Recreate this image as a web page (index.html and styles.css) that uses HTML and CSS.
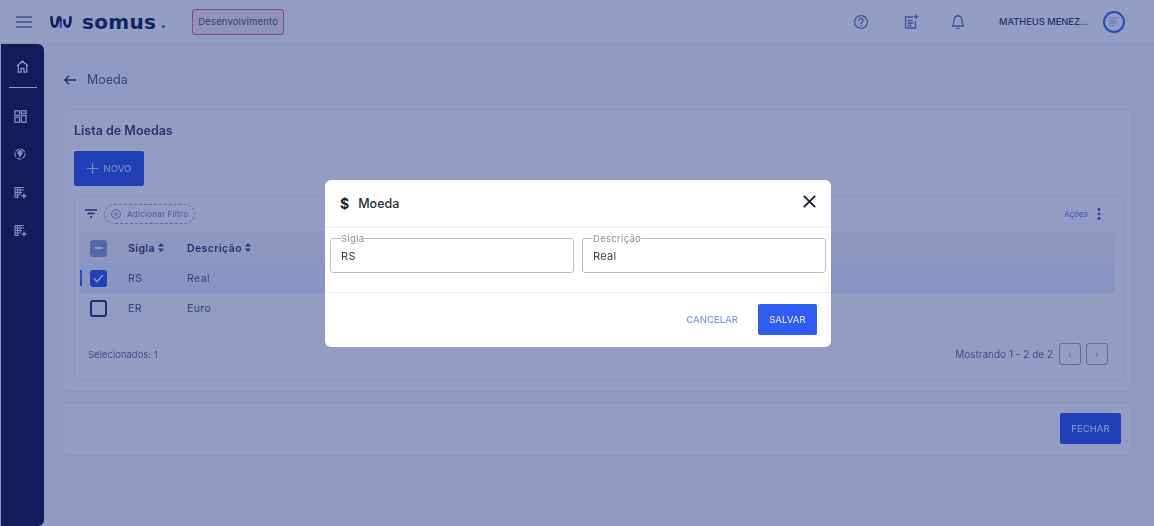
FILE: index.html
```html
<!DOCTYPE html>
<html lang="pt-BR">
<head>
  <meta charset="UTF-8" />
  <meta name="viewport" content="width=device-width, initial-scale=1.0"/>
  <title>Moeda</title>
  <link rel="stylesheet" href="styles.css">
</head>
<body>

<div class="page">
  <header class="topbar">
    <svg class="burger" width="16" height="12" viewBox="0 0 16 12"><path d="M0 1h16M0 6h16M0 11h16" stroke="#5d6c9c" stroke-width="1.400"/></svg>
    <div class="logo">
      <svg width="22" height="14" viewBox="0 0 22 14" fill="none"><path d="M1.500 2.500c0 5 .8 9 3 9s3-3 3.200-6c.2-2 .8-3 1.500-3s1.300 1 1.500 3" stroke="#00103c" stroke-width="2.800" stroke-linecap="round"/><path d="M20.500 2.500c0 5-.8 9-3 9s-3-3-3.200-6" stroke="#00103c" stroke-width="2.800" stroke-linecap="round"/><path d="M10.700 12V8" stroke="#2f5be7" stroke-width="2.400" stroke-linecap="round"/></svg>
      <span class="logo-name">somus</span><span class="logo-dot">.</span>
    </div>
    <div class="env-tag">Desenvolvimento</div>
    <div class="topbar-right">
      <svg class="top-icon icon-help" width="16" height="16" viewBox="0 0 16 16" fill="none" stroke="#5a6a9c" stroke-width="1.300"><circle cx="8" cy="8" r="6.400"/><path d="M6 6.300a2 2 0 1 1 3 1.700c-.7.400-1 .8-1 1.500" stroke-linecap="round"/><path d="M8 11v1.200"/></svg>
      <svg class="top-icon" width="16" height="16" viewBox="0 0 16 16" fill="none" stroke="#5a6a9c" stroke-width="1.300"><path d="M10 3H2.500v11h10V7"/><path d="M4.500 6.500h5M4.500 9h6M4.500 11.500h4"/><path d="M13 .5v4.500M10.800 2.700h4.500"/></svg>
      <svg class="top-icon" width="16" height="16" viewBox="0 0 16 16" fill="none" stroke="#5a6a9c" stroke-width="1.300"><path d="M8 2c-2.600 0-4 1.800-4 4.500 0 3-1 4.500-1.500 5.500h11c-.5-1-1.500-2.500-1.500-5.500C12 3.800 10.600 2 8 2z"/><path d="M8 .7V2M6.500 14.300h3"/></svg>
      <span class="user-name">MATHEUS MENEZ...</span>
      <div class="avatar"><svg width="12" height="10" viewBox="0 0 12 10" stroke="#a5afcc" stroke-width="1"><path d="M1 1h10M1 3.500h7M1 6h9M1 8.500h6"/></svg></div>
    </div>
  </header>

  <div class="layout">
    <nav class="sidebar">
      <svg class="side-icon" width="13" height="13" viewBox="0 0 14 14" fill="none" stroke="#e8ecf7" stroke-width="1.400"><path d="M1 6.500 7 1.300l6 5.200M2.500 5.500v7.500h3V9h3v4h3V5.500"/></svg>
      <div class="side-line"></div>
      <svg class="side-icon dash" width="13" height="13" viewBox="0 0 14 14" fill="none" stroke="#d5dbee" stroke-width="1.400"><rect x="1" y=".8" width="5" height="5"/><rect x="8" y=".8" width="5" height="3"/><rect x="1" y="7.800" width="5" height="5.400"/><rect x="8" y="6" width="5" height="7.200"/></svg>
      <svg class="side-icon coin" width="12" height="12" viewBox="0 0 12 12" fill="none" stroke="#d5dbee" stroke-width="1.100"><circle cx="6" cy="6" r="5" stroke-dasharray="5 1"/><path d="M6 2.800c1.300 0 2 .9 2 1.900C8 6 6.500 7.500 6 8.500 5.500 7.500 4 6 4 4.700c0-1 .7-1.900 2-1.900z" fill="#d5dbee"/></svg>
      <svg class="side-icon list-a" width="13" height="13" viewBox="0 0 13 13" fill="none" stroke="#d5dbee" stroke-width="1.100"><path d="M1 1.500h9M1 4h9M1 6.500h7M1 9h5M1 11.500h4M1 1v11M3.500 1v11M6 1v8"/><path d="M10 7.500v5M7.500 10h5" stroke-width="1.400"/></svg>
      <svg class="side-icon list-b" width="13" height="13" viewBox="0 0 13 13" fill="none" stroke="#d5dbee" stroke-width="1.100"><path d="M1 1.500h9M1 4h9M1 6.500h7M1 9h5M1 11.500h4M1 1v11M3.500 1v11M6 1v8"/><path d="M10 7.500v5M7.500 10h5" stroke-width="1.400"/></svg>
    </nav>

    <main class="content">
      <div class="page-title">
        <svg width="12" height="10" viewBox="0 0 12 10" fill="none" stroke="#1f2c58" stroke-width="1.300"><path d="M12 5H1M5 .8 1 5l4 4.200"/></svg>
        <span>Moeda</span>
      </div>

      <section class="panel">
        <h2 class="panel-title">Lista de Moedas</h2>
        <button class="btn btn-new">
          <svg width="11" height="11" viewBox="0 0 11 11" stroke="#c4cff6" stroke-width="1.200"><path d="M5.500 0v11M0 5.500h11"/></svg>
          NOVO
        </button>

        <div class="grid-card">
          <div class="filter-row">
            <svg width="12" height="9" viewBox="0 0 12 9" stroke="#1b2a60" stroke-width="1.300"><path d="M0 1h12M2.500 4.500h7M5 8h2"/></svg>
            <div class="filter-pill">
              <svg width="10" height="10" viewBox="0 0 10 10" fill="none" stroke="#6e7cab" stroke-width=".9"><circle cx="5" cy="5" r="4.400"/><path d="M5 2.800v4.400M2.800 5h4.400"/></svg>
              Adicionar Filtro
            </div>
            <div class="actions">Ações
              <svg width="4" height="12" viewBox="0 0 4 12" fill="#2a4bc4"><circle cx="2" cy="1.500" r="1.400"/><circle cx="2" cy="6" r="1.400"/><circle cx="2" cy="10.500" r="1.400"/></svg>
            </div>
          </div>

          <div class="table">
            <div class="row row-head">
              <span class="check check-some"></span>
              <span class="cell-sigla">Sigla <svg class="sort" width="6" height="9" viewBox="0 0 6 9" fill="#2e3a66"><path d="M3 0l3 3.500H0zM3 9 0 5.500h6z"/></svg></span>
              <span class="cell-desc">Descrição <svg class="sort" width="6" height="9" viewBox="0 0 6 9" fill="#2e3a66"><path d="M3 0l3 3.500H0zM3 9 0 5.500h6z"/></svg></span>
            </div>
            <div class="row row-selected">
              <span class="check check-on"><svg width="11" height="9" viewBox="0 0 11 9" fill="none" stroke="#e6ebfc" stroke-width="1.600"><path d="M1 4.500 4 7.500 10 1"/></svg></span>
              <span class="cell-sigla">RS</span>
              <span class="cell-desc">Real</span>
            </div>
            <div class="row row-plain">
              <span class="check"></span>
              <span class="cell-sigla">ER</span>
              <span class="cell-desc">Euro</span>
            </div>
          </div>

          <div class="grid-footer">
            <span>Selecionados: 1</span>
            <div class="pager">
              <span class="pager-text">Mostrando 1 - 2 de 2</span>
              <button class="pager-btn">‹</button>
              <button class="pager-btn">›</button>
            </div>
          </div>
        </div>
      </section>

      <section class="panel panel-bottom">
        <button class="btn btn-close">FECHAR</button>
      </section>
    </main>
  </div>
</div>

<div class="overlay">
  <div class="modal">
    <div class="modal-head">
      <span class="modal-dollar">$</span>
      <span class="modal-title">Moeda</span>
      <svg class="modal-x" width="13" height="13" viewBox="0 0 13 13" stroke="#1c1f2b" stroke-width="1.900"><path d="M.8.800l11.400 11.400M12.200.800.800 12.200"/></svg>
    </div>
    <div class="modal-body">
      <fieldset class="field"><legend>Sigla</legend><span>RS</span></fieldset>
      <fieldset class="field"><legend>Descrição</legend><span>Real</span></fieldset>
    </div>
    <div class="modal-foot">
      <button class="btn-cancel">CANCELAR</button>
      <button class="btn btn-save">SALVAR</button>
    </div>
  </div>
</div>

</body>
</html>
```

FILE: styles.css
```css
:root {
  --text: #3e4a70;
  --line: #e3e7f2;
}

* {
  box-sizing: border-box;
}

html, body {
  height: 100%;
}

body {
  margin: 0;
  font-family: "Inter", "Liberation Sans", sans-serif;
  background: #eff3f9;
  color: var(--text);
  overflow: hidden;
}

.page {
  height: 526px;
  display: flex;
  flex-direction: column;
  filter: blur(0.7px);
}

.topbar {
  height: 44px;
  flex: none;
  display: flex;
  align-items: center;
  padding: 0 29px 0 16px;
  background: #f8f9fb;
  border-bottom: 1px solid var(--line);
}

.logo {
  display: flex;
  align-items: center;
  margin-left: 18px;
}

.logo-name {
  margin-left: 10px;
  font-family: "DejaVu Sans", sans-serif;
  font-weight: 700;
  font-size: 20px;
  letter-spacing: 0.300px;
  line-height: 20px;
  color: #00103c;
}

.logo-dot {
  margin-left: 4px;
  font-weight: 700;
  font-size: 18px;
  line-height: 20px;
  color: #2f5be7;
}

.env-tag {
  margin-left: 26px;
  width: 92px;
  height: 26px;
  display: flex;
  align-items: center;
  justify-content: center;
  font-size: 9.500px;
  letter-spacing: 0.150px;
  color: #3e4a70;
  background: #f2e2e9;
  border: 1px solid #d85a80;
  border-radius: 3px;
}

.topbar-right {
  margin-left: auto;
  display: flex;
  align-items: center;
}

.top-icon + .top-icon {
  margin-left: 31px;
}

.icon-help + .top-icon {
  margin-left: 34px;
}

.user-name {
  margin-left: 33px;
  width: 90px;
  font-size: 9.300px;
  font-weight: 500;
  white-space: nowrap;
  color: #1f2c58;
}

.avatar {
  margin-left: 14px;
  width: 22px;
  height: 22px;
  border-radius: 50%;
  border: 2.500px solid #2f5be7;
  background: #f4f6fb;
  display: flex;
  align-items: center;
  justify-content: center;
}

.layout {
  flex: 1;
  display: flex;
  min-height: 0;
}

.sidebar {
  width: 43px;
  margin-left: 1px;
  flex: none;
  display: flex;
  flex-direction: column;
  align-items: center;
  background: #000030;
  border-top-right-radius: 6px;
  border-bottom-right-radius: 6px;
  padding-top: 16px;
}

.side-line {
  width: 28px;
  height: 1px;
  margin-top: 14px;
  background: #e8ecf7;
}

.side-icon.dash {
  margin-top: 22px;
  margin-right: 5px;
}

.side-icon.coin {
  margin-top: 25px;
  margin-right: 5px;
}

.side-icon.list-a {
  margin-top: 26px;
  margin-right: 5px;
}

.side-icon.list-b {
  margin-top: 25px;
  margin-right: 5px;
}

.content {
  flex: 1;
  min-width: 0;
  padding: 0 21px 0 18px;
}

.page-title {
  height: 65px;
  display: flex;
  align-items: center;
  gap: 11px;
  padding: 6px 0 0 2px;
  font-size: 12.500px;
}

.panel {
  background: #f7f8fb;
  border: 1px solid var(--line);
  border-radius: 6px;
  padding: 13px 7px 12px 11px;
  height: 283px;
}

.panel-title {
  margin: 0 0 12px;
  font-size: 12.500px;
  line-height: 16px;
  font-weight: 600;
  color: #1f2c58;
}

.btn {
  border: none;
  border-radius: 2px;
  color: #fff;
  font-family: inherit;
  font-size: 9.500px;
  font-weight: 500;
  display: flex;
  align-items: center;
  justify-content: center;
  padding: 0;
}

.btn-new {
  width: 70px;
  height: 35px;
  gap: 6px;
  color: #c4cff6;
  background: #1d43e0;
}

.grid-card {
  margin-top: 10px;
  height: 184px;
  border: 1px solid var(--line);
  border-radius: 3px;
  padding: 0 9px 0 5px;
}

.filter-row {
  height: 36px;
  display: flex;
  align-items: center;
  padding: 0 0 3px 5px;
}

.filter-pill {
  margin-left: 7px;
  height: 20px;
  padding: 0 6px;
  display: flex;
  align-items: center;
  gap: 6px;
  font-size: 8px;
  letter-spacing: 0.200px;
  font-weight: 500;
  color: #7986b2;
  border: 1px dashed #8f9bc2;
  border-radius: 10px;
}

.actions {
  margin-left: auto;
  margin-right: 14px;
  display: flex;
  align-items: center;
  gap: 9px;
  font-size: 8px;
  color: #4a6de0;
}

.table {
  font-size: 10.500px;
  letter-spacing: 0.400px;
}

.row {
  height: 30px;
  display: flex;
  align-items: center;
  padding-left: 10px;
  position: relative;
}

.row-head {
  background: #eceef4;
  font-weight: 600;
  color: #1f2c58;
}

.row-selected {
  background: #e3e8f9;
}

.row-selected::before {
  content: "";
  position: absolute;
  left: 0;
  top: 7px;
  width: 2px;
  height: 16px;
  background: #2f5be7;
}

.row-plain {
  background: #f4f5f9;
}

.check {
  width: 17px;
  height: 17px;
  flex: none;
  border: 2px solid #10235f;
  border-radius: 3px;
  display: flex;
  align-items: center;
  justify-content: center;
}

.check-on {
  border-color: #1d43e0;
  background: #1d43e0;
}

.check-some {
  border: none;
  background: #8592c4;
}

.check-some::after {
  content: "";
  width: 8px;
  height: 2px;
  background: #f2f4fa;
}

.cell-sigla {
  width: 59px;
  margin-left: 21px;
  white-space: nowrap;
}

.sort {
  vertical-align: 0;
}

.grid-footer {
  display: flex;
  align-items: center;
  justify-content: space-between;
  height: 40px;
  margin-top: 11px;
  padding: 0 7px 0 8px;
  font-size: 9.500px;
  color: #56628c;
}

.pager {
  display: flex;
  align-items: center;
  gap: 5px;
}

.pager-text {
  font-size: 10px;
  margin-right: 1px;
}

.pager-btn {
  width: 22px;
  height: 22px;
  padding: 0;
  background: #f7f8fb;
  border: 1px solid #8f9bc2;
  border-radius: 3px;
  font-size: 10px;
  color: #7986b2;
}

.panel-bottom {
  margin-top: 10px;
  height: 54px;
  padding: 10px 11px;
  display: flex;
  justify-content: flex-end;
}

.btn-close {
  width: 61px;
  height: 31px;
  color: #d0d8f8;
  background: #1d43e0;
}

.overlay {
  position: fixed;
  top: 0;
  left: 0;
  width: 100%;
  height: 100%;
  background: rgba(38, 58, 135, 0.48);
  display: flex;
  align-items: center;
  justify-content: center;
}

.modal {
  width: 506px;
  height: 167px;
  margin-left: 2px;
  background: #fff;
  border-radius: 6px;
  display: flex;
  flex-direction: column;
}

.modal-head {
  height: 48px;
  flex: none;
  display: flex;
  align-items: center;
  padding: 2px 15px 0;
  border-bottom: 2px solid #f3f4f9;
}

.modal-dollar {
  font-size: 14px;
  font-weight: 700;
  color: #1c1f2b;
}

.modal-title {
  margin-left: 9px;
  font-size: 12.500px;
  font-weight: 500;
  color: #2b2f3a;
}

.modal-x {
  margin-left: auto;
  margin-top: -4px;
}

.modal-body {
  height: 65px;
  flex: none;
  display: grid;
  grid-template-columns: 244px 244px;
  column-gap: 8px;
  padding: 5px 5px 0;
  border-bottom: 1px solid #eef0f5;
}

.field {
  margin: 0;
  padding: 0 0 0 10px;
  height: 40px;
  border: 1.500px solid #b9bdcc;
  border-radius: 3px;
  font-size: 11px;
  letter-spacing: 0.300px;
  color: #3c4150;
}

.field legend {
  padding: 0;
  margin-left: 0;
  font-size: 9.500px;
  line-height: 12px;
  color: #8a8f9e;
}

.field span {
  display: block;
  margin-top: 4px;
  line-height: 14px;
}

.modal-foot {
  flex: 1;
  display: flex;
  align-items: center;
  justify-content: flex-end;
  gap: 20px;
  padding: 0 14px 1px 0;
}

.btn-cancel {
  border: none;
  background: none;
  padding: 0;
  font-family: inherit;
  font-size: 9.500px;
  font-weight: 500;
  color: #8097e8;
}

.btn-save {
  width: 59px;
  height: 31px;
  color: #d5ddfb;
  background: #2f5cf0;
}
```
